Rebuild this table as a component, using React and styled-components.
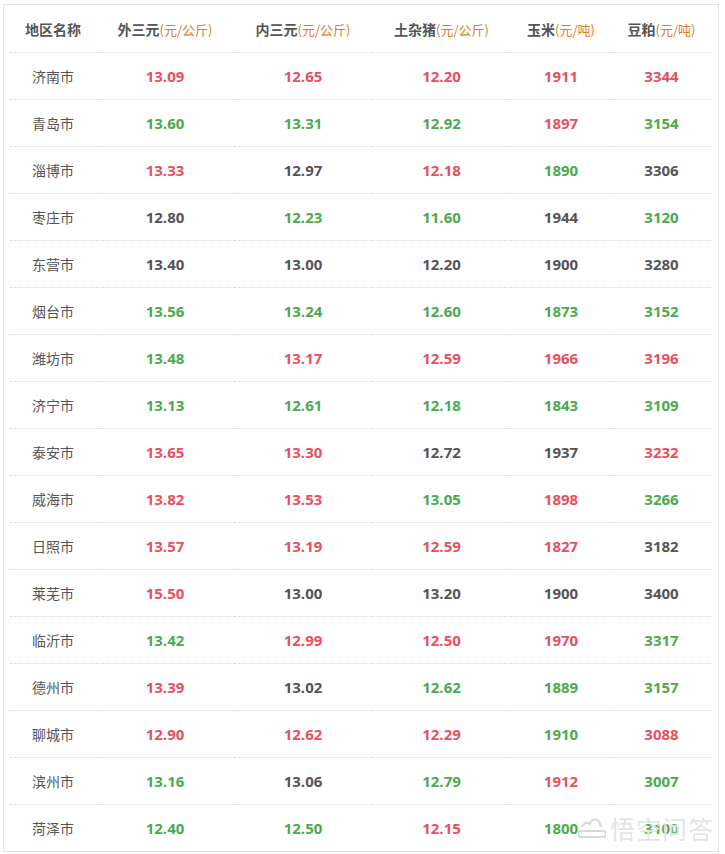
import React from 'react';
import styled, { createGlobalStyle } from 'styled-components';

const GlobalStyle = createGlobalStyle`
  body {
    margin: 0;
    background: #fff;
    font-family: "Noto Sans CJK SC", "Open Sans", sans-serif;
  }
`;

const columns = [
  { title: '地区名称', width: 86 },
  { title: '外三元', unit: '(元/公斤)', width: 138 },
  { title: '内三元', unit: '(元/公斤)', width: 138 },
  { title: '土杂猪', unit: '(元/公斤)', width: 139 },
  { title: '玉米', unit: '(元/吨)', width: 100 },
  { title: '豆粕', unit: '(元/吨)', width: 101 },
];

const rows = [
  ['济南市', '13.09 r', '12.65 r', '12.20 r', '1911 r', '3344 r'],
  ['青岛市', '13.60 g', '13.31 g', '12.92 g', '1897 r', '3154 g'],
  ['淄博市', '13.33 r', '12.97 k', '12.18 r', '1890 g', '3306 k'],
  ['枣庄市', '12.80 k', '12.23 g', '11.60 g', '1944 k', '3120 g'],
  ['东营市', '13.40 k', '13.00 k', '12.20 k', '1900 k', '3280 k'],
  ['烟台市', '13.56 g', '13.24 g', '12.60 g', '1873 g', '3152 g'],
  ['潍坊市', '13.48 g', '13.17 r', '12.59 r', '1966 r', '3196 r'],
  ['济宁市', '13.13 g', '12.61 g', '12.18 g', '1843 g', '3109 g'],
  ['泰安市', '13.65 r', '13.30 r', '12.72 k', '1937 k', '3232 r'],
  ['威海市', '13.82 r', '13.53 r', '13.05 g', '1898 r', '3266 g'],
  ['日照市', '13.57 r', '13.19 r', '12.59 r', '1827 r', '3182 k'],
  ['莱芜市', '15.50 r', '13.00 k', '13.20 k', '1900 k', '3400 k'],
  ['临沂市', '13.42 g', '12.99 r', '12.50 r', '1970 r', '3317 g'],
  ['德州市', '13.39 r', '13.02 k', '12.62 g', '1889 g', '3157 g'],
  ['聊城市', '12.90 r', '12.62 r', '12.29 r', '1910 g', '3088 r'],
  ['滨州市', '13.16 g', '13.06 k', '12.79 g', '1912 r', '3007 g'],
  ['菏泽市', '12.40 g', '12.50 g', '12.15 r', '1800 g', '3100 g'],
];

const tones = { r: '#e8505e', g: '#4caa4c', k: '#555555' };

const Page = styled.div`
  padding: 4px 0 0 3px;
`;

const Frame = styled.div`
  position: relative;
  width: 703px;
  height: 846px;
  border: 1px solid #e3e3e3;
  padding: 0 5px 0 6px;
  overflow: hidden;
`;

const Table = styled.table`
  width: 702px;
  border-collapse: collapse;
  table-layout: fixed;
`;

const HeadCell = styled.th`
  height: 47px;
  padding: 0;
  border-bottom: 1px dotted #d8d8d8;
  text-align: center;
  font-size: 14px;
  font-weight: 700;
  color: #555;
  white-space: nowrap;
`;

const Unit = styled.span`
  font-size: 13px;
  font-weight: 400;
  color: #e07b2a;
`;

const Row = styled.tr`
  &:not(:last-child) td {
    border-bottom: 1px dotted #d8d8d8;
  }
`;

const NameCell = styled.td`
  height: 46px;
  padding: 0;
  text-align: center;
  font-size: 14px;
  color: #555;
`;

const ValueCell = styled.td`
  height: 46px;
  padding: 0;
  text-align: center;
  font-family: "Open Sans", "Liberation Sans", sans-serif;
  font-size: 15px;
  font-weight: 700;
  color: ${({ $tone }) => tones[$tone]};
`;

const Watermark = styled.div`
  position: absolute;
  right: 4px;
  bottom: 5px;
  display: flex;
  align-items: center;
  gap: 4px;
  color: rgba(215, 215, 215, 0.7);
  font-size: 25px;
  letter-spacing: 1px;
  text-shadow: 0 0 1px #fff;
  pointer-events: none;
`;

function Cloud() {
  return (
    <svg width="28" height="20" viewBox="0 0 28 20" fill="none" stroke="rgba(205,205,205,0.8)" strokeWidth="2">
      <path d="M4 9 a5 5 0 0 1 8 -3 a5 5 0 0 1 10 1 a4 4 0 0 1 2 2" />
      <path d="M3 13 h22 a3 3 0 0 1 0 6 h-22 a3 3 0 0 1 0 -6 z" />
    </svg>
  );
}

export default function App() {
  return (
    <Page>
      <GlobalStyle />
      <Frame>
        <Table>
          <colgroup>
            {columns.map((c) => (
              <col key={c.title} style={{ width: c.width }} />
            ))}
          </colgroup>
          <thead>
            <tr>
              {columns.map((c) => (
                <HeadCell key={c.title}>
                  {c.title}
                  {c.unit && <Unit>{c.unit}</Unit>}
                </HeadCell>
              ))}
            </tr>
          </thead>
          <tbody>
            {rows.map(([name, ...values]) => (
              <Row key={name}>
                <NameCell>{name}</NameCell>
                {values.map((v, i) => {
                  const [num, tone] = v.split(' ');
                  return (
                    <ValueCell key={i} $tone={tone}>
                      {num}
                    </ValueCell>
                  );
                })}
              </Row>
            ))}
          </tbody>
        </Table>
        <Watermark>
          <Cloud />
          悟空问答
        </Watermark>
      </Frame>
    </Page>
  );
}
